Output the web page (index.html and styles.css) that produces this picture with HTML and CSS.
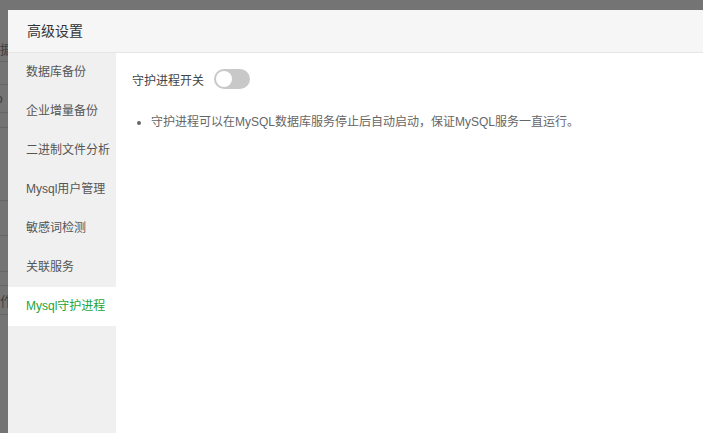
FILE: index.html
```html
<!DOCTYPE html>
<html lang="zh-CN">
<head>
<meta charset="utf-8">
<title>高级设置</title>
<link rel="stylesheet" href="styles.css">
</head>
<body>
<div class="page">
  <div class="row r1"><span class="cell">数据</span></div>
  <div class="row r2"></div>
  <div class="row r3"><span class="cell">pro</span></div>
  <div class="row r4"></div>
  <div class="row r5"></div>
  <div class="row r6"></div>
  <div class="row r7"></div>
  <div class="row r8"></div>
  <div class="row r9"><span class="cell">操作</span></div>
</div>
<div class="modal">
  <div class="modal-header">高级设置</div>
  <div class="modal-body">
    <ul class="sidebar">
      <li class="item">数据库备份</li>
      <li class="item">企业增量备份</li>
      <li class="item">二进制文件分析</li>
      <li class="item">Mysql用户管理</li>
      <li class="item">敏感词检测</li>
      <li class="item">关联服务</li>
      <li class="item active">Mysql守护进程</li>
    </ul>
    <div class="content">
      <div class="switch-row">
        <span class="label">守护进程开关</span>
        <span class="switch"><span class="knob"></span></span>
      </div>
      <ul class="tips">
        <li>守护进程可以在MySQL数据库服务停止后自动启动，保证MySQL服务一直运行。</li>
      </ul>
    </div>
  </div>
</div>
</body>
</html>
```
FILE: styles.css
```css
html, body {
  margin: 0;
  padding: 0;
  height: 100%;
  overflow: hidden;
}
body {
  background: #747474;
  font-family: "Liberation Sans", "Noto Sans CJK SC", sans-serif;
  position: relative;
}
.page {
  padding-top: 35px;
}
.row {
  border-bottom: 1px solid #666;
  box-sizing: border-box;
  display: flex;
  align-items: center;
  overflow: hidden;
}
.r1 { height: 27px; }
.r2 { height: 23px; }
.r3 { height: 28px; }
.r4 { height: 15px; }
.r5 { height: 73px; }
.r6 { height: 35px; }
.r7 { height: 36px; }
.r8 { height: 14px; }
.r9 { height: 29px; }
.cell {
  font-size: 13px;
  color: #3f3f3f;
  margin-left: -13px;
  white-space: nowrap;
}
.r3 .cell { margin-left: -16px; }
.modal {
  position: absolute;
  left: 8px;
  top: 10px;
  width: 760px;
  height: 440px;
  background: #fff;
  display: flex;
  flex-direction: column;
}
.modal-header {
  height: 42px;
  line-height: 42px;
  background: #f6f6f6;
  border-bottom: 1px solid #e6e6e6;
  padding-left: 19px;
  font-size: 14px;
  color: #333;
  flex: none;
}
.modal-body {
  flex: 1;
  display: flex;
}
.sidebar {
  width: 108px;
  margin: 0;
  padding: 0;
  list-style: none;
  background: #f0f0f0;
  flex: none;
}
.item {
  height: 39px;
  line-height: 39px;
  padding-left: 18px;
  font-size: 12px;
  color: #555;
  white-space: nowrap;
}
.item.active {
  background: #fff;
  color: #20a53a;
}
.content {
  flex: 1;
  padding: 16px 16px 0;
}
.switch-row {
  display: flex;
  align-items: center;
  height: 20px;
}
.label {
  font-size: 12px;
  color: #444;
  margin-right: 10px;
}
.switch {
  width: 36px;
  height: 20px;
  border-radius: 10px;
  background: #c8c8c8;
  display: flex;
  align-items: center;
  padding-left: 2px;
  box-sizing: border-box;
}
.knob {
  width: 16px;
  height: 16px;
  border-radius: 50%;
  background: #fff;
}
.tips {
  margin: 23px 0 0;
  padding-left: 19px;
  font-size: 12px;
  line-height: 20px;
  color: #666;
}
```
